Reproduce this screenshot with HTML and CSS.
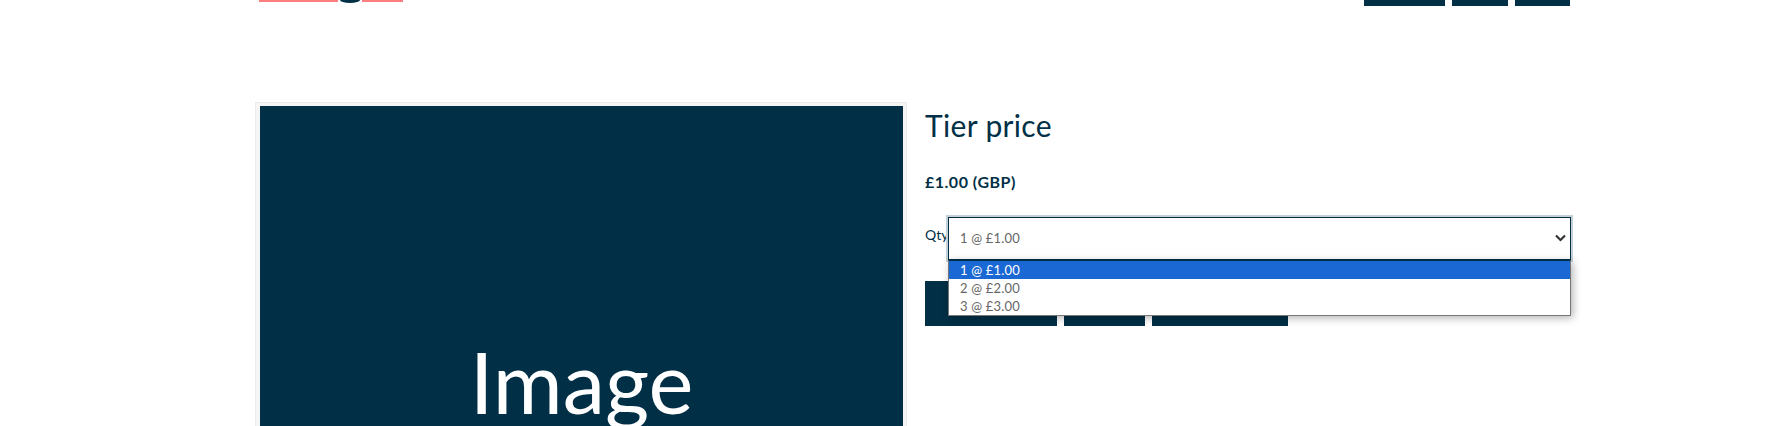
FILE: index.html
```html
<!DOCTYPE html>
<html lang="en">
<head>
	<meta charset="utf-8"/>
	<meta name="viewport" content="width=device-width, initial-scale=1">
	<title>Tier price</title>
	<link rel="stylesheet" href="styles.css">
</head>
<body>
	<header class="site-header">
		<div class="logo">
			<span class="logo-bar logo-bar-left"></span>
			<span class="logo-dot"></span>
			<span class="logo-bar logo-bar-right"></span>
		</div>
		<nav class="site-nav">
			<a class="nav-item nav-wide"></a>
			<a class="nav-item nav-mid"></a>
			<a class="nav-item nav-last"></a>
		</nav>
	</header>

	<main class="product">
		<div class="product-image">
			<div class="placeholder">Image</div>
		</div>
		<div class="product-info">
			<h1 class="product-title">Tier price</h1>
			<p class="product-price">£1.00 (GBP)</p>
			<div class="qty-row">
				<label class="qty-label" for="qty">Qty</label>
				<div class="qty-field">
					<div class="qty-select" id="qty">
						<span>1 @ £1.00</span>
						<svg class="qty-arrow" width="11" height="8" viewBox="0 0 11 8"><path d="M1 1.5 5.5 6 10 1.5" fill="none" stroke="#333" stroke-width="2.2"/></svg>
					</div>
					<ul class="qty-menu">
						<li class="qty-option is-selected">1 @ £1.00</li>
						<li class="qty-option">2 @ £2.00</li>
						<li class="qty-option">3 @ £3.00</li>
					</ul>
				</div>
			</div>
			<div class="actions">
				<button class="action action-add" type="button"></button>
				<button class="action action-mid" type="button"></button>
				<button class="action action-last" type="button"></button>
			</div>
		</div>
	</main>
</body>
</html>
```

FILE: styles.css
```css
html {
	background: white;
}

body {
	margin: 0;
	height: 426px;
	overflow: hidden;
	font-family: "Lato", sans-serif;
	color: #012f46;
}

.site-header {
	display: flex;
	justify-content: space-between;
	align-items: flex-start;
	width: 1311px;
	height: 6px;
	margin-left: 259px;
	box-sizing: border-box;
}

.logo {
	display: flex;
	align-items: flex-start;
	width: 144px;
	height: 3px;
}

.logo-bar {
	height: 2px;
	background: #fb7d7d;
}

.logo-bar-left {
	width: 79px;
}

.logo-bar-right {
	width: 41px;
}

.logo-dot {
	width: 20px;
	height: 3px;
	margin: 0 2px;
	background: #012f46;
	border-radius: 0 0 10px 10px / 0 0 3px 3px;
}

.site-nav {
	display: flex;
	gap: 7px;
}

.nav-item {
	display: block;
	height: 6px;
	background: #012f46;
}

.nav-wide {
	width: 81px;
}

.nav-mid {
	width: 56px;
}

.nav-last {
	width: 55px;
}

.product {
	display: flex;
	gap: 18px;
	width: 1318px;
	margin: 96px 0 0 255px;
}

.product-image {
	flex: none;
	width: 652px;
	height: 500px;
	box-sizing: border-box;
	padding: 3px 3px 3px 4px;
	border: 1px solid #ececec;
	background: #f5f5f5;
}

.placeholder {
	height: 100%;
	padding-top: 225px;
	box-sizing: border-box;
	background: #012f46;
	color: white;
	font-family: "Lato", sans-serif;
	font-size: 85px;
	line-height: 100px;
	text-align: center;
}

.product-info {
	flex: 1;
}

.product-title {
	margin: 5px 0 0;
	font-size: 30px;
	font-weight: 400;
	line-height: 36px;
	letter-spacing: 0.35px;
}

.product-price {
	margin: 29px 0 0;
	font-size: 16px;
	font-weight: 700;
	line-height: 20px;
	letter-spacing: 0.5px;
}

.qty-row {
	display: flex;
	margin-top: 23px;
}

.qty-label {
	padding-top: 11px;
	width: 21px;
	font-size: 14px;
	line-height: 18px;
}

.qty-field {
	position: relative;
	flex: 1;
}

.qty-select {
	display: flex;
	align-items: center;
	justify-content: space-between;
	height: 43px;
	box-sizing: border-box;
	margin: 2px;
	padding: 0 4px 2px 11px;
	border: 1px solid #012f46;
	outline: 2px solid #c5d0d6;
	background: white;
	color: #666;
	font-size: 13px;
	letter-spacing: 0.2px;
}

.qty-menu {
	position: absolute;
	top: 45px;
	left: 2px;
	right: 2px;
	margin: 0;
	padding: 0;
	list-style: none;
	background: white;
	border: 1px solid #767676;
	border-top-color: #012f46;
	box-shadow: 2px 2px 8px rgba(0, 0, 0, 0.3);
	color: #666;
	font-size: 13px;
	letter-spacing: 0.2px;
}

.qty-option {
	height: 18px;
	padding-left: 11px;
	line-height: 18px;
}

.is-selected {
	background: #1a68d3;
	color: white;
}

.actions {
	display: flex;
	gap: 7px;
	margin-top: 19px;
}

.action {
	height: 45px;
	padding: 0;
	border: 0;
	background: #012f46;
}

.action-add {
	width: 132px;
}

.action-mid {
	width: 81px;
}

.action-last {
	width: 136px;
}
```
